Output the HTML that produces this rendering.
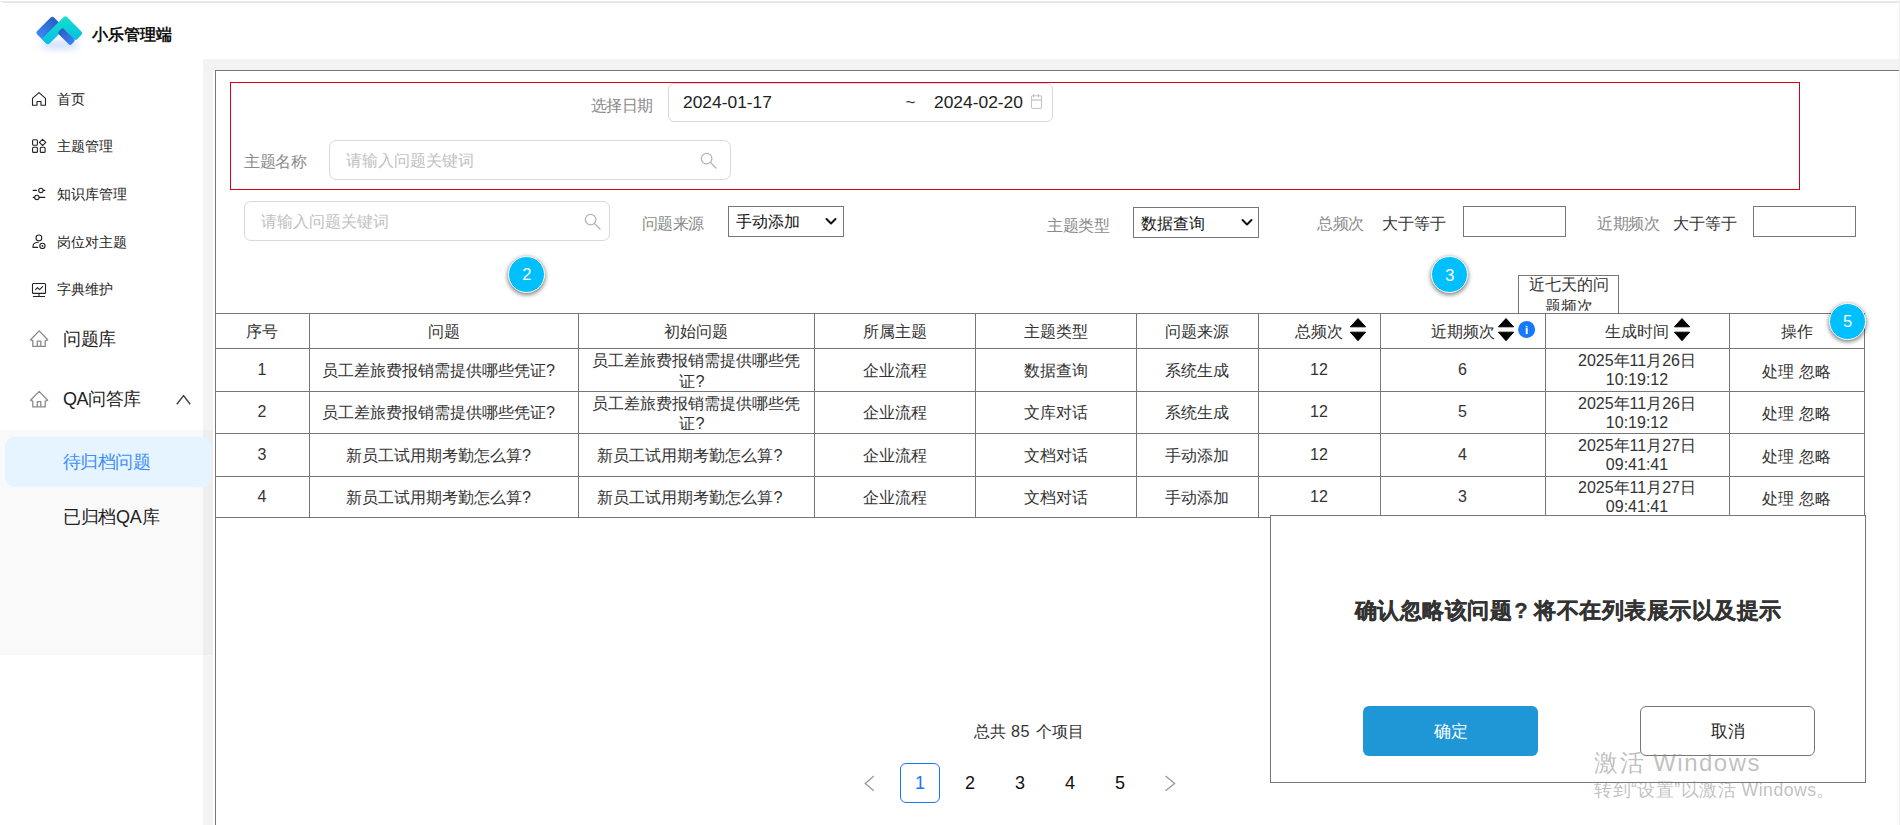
<!DOCTYPE html>
<html><head><meta charset="utf-8"><title>小乐管理端</title>
<style>
html,body{margin:0;padding:0;}
body{width:1900px;height:825px;overflow:hidden;position:relative;background:#fff;font-family:"Liberation Sans",sans-serif;}
.t{position:absolute;white-space:nowrap;line-height:1;}
.b{position:absolute;box-sizing:border-box;}
svg{position:absolute;overflow:visible;}
</style></head><body>

<div class="b" style="left:0px;top:1px;width:1900px;height:1px;background:#e8ebf1"></div>
<div class="b" style="left:3px;top:2px;width:1897px;height:1px;background:#e6e6e6"></div>
<div class="b" style="left:0px;top:430px;width:213px;height:225px;background:#f9f9f9"></div>
<div class="b" style="left:203px;top:70px;width:10px;height:755px;background:rgba(0,0,0,0.045)"></div>
<div class="b" style="left:203px;top:59px;width:1696px;height:11px;background:#f3f3f3"></div>
<div class="b" style="left:1899px;top:0px;width:1px;height:825px;background:#eeeeee"></div>
<div class="b" style="left:215px;top:70px;width:1684px;height:1px;background:#777"></div>
<div class="b" style="left:215px;top:70px;width:1px;height:755px;background:#777"></div>
<svg style="left:0px;top:0px" width="100" height="60" viewBox="0 0 100 60">
<defs>
<linearGradient id="gb1" x1="0" y1="0.5" x2="1" y2="0.5"><stop offset="0" stop-color="#3a88f6"/><stop offset="1" stop-color="#2a5fc2"/></linearGradient>
<linearGradient id="gc" x1="1" y1="0" x2="0" y2="1"><stop offset="0" stop-color="#14e2cc"/><stop offset="0.55" stop-color="#08c4e0"/><stop offset="1" stop-color="#06a6f4"/></linearGradient>
<linearGradient id="gb2" x1="0.5" y1="0" x2="0.5" y2="1"><stop offset="0" stop-color="#2a5ec2"/><stop offset="1" stop-color="#3a82f2"/></linearGradient>
<filter id="lsh" x="-50%" y="-50%" width="200%" height="200%"><feGaussianBlur stdDeviation="3"/></filter>
</defs>
<ellipse cx="60" cy="45" rx="20" ry="4.5" fill="#5b8cff" opacity="0.28" filter="url(#lsh)"/>
<g transform="translate(0 -0.4) matrix(0.70711 -0.70711 0.70711 0.70711 0 0)">
<rect x="1.7" y="48.5" width="23.8" height="17.5" rx="2.4" fill="url(#gb1)"/>
<path d="M1.7,57.4 H32.7 Q35,57.4 35,59.7 V80.2 Q35,82.5 32.7,82.5 H26.6 Q24.3,82.5 24.3,80.2 V66 H4.1 Q1.7,66 1.7,63.6 Z" fill="url(#gc)"/>
<rect x="17" y="64" width="7.6" height="18.3" rx="2.4" fill="url(#gb2)"/>
</g></svg>
<div class="t" style="left:92.00px;top:26.94px;font-size:16px;color:#111;font-weight:bold;text-align:left;">小乐管理端</div>
<svg style="left:0px;top:0px" width="60" height="310"><path d="M32.5,105.3 V98.3 L39,92.6 L45.5,98.3 V105.3 H41 V101.5 H37 V105.3 Z" fill="none" stroke="#222" stroke-width="1.1" stroke-linejoin="round" stroke-linecap="round"/><rect x="32.6" y="139.8" width="4.8" height="5.4" rx="1" fill="none" stroke="#222" stroke-width="1.1" stroke-linejoin="round" stroke-linecap="round"/><path d="M42.6,139.3 L45.8,142.4 L42.6,145.5 L39.4,142.4 Z" fill="none" stroke="#222" stroke-width="1.1" stroke-linejoin="round" stroke-linecap="round"/><rect x="32.6" y="147.3" width="4.8" height="5.1" rx="1" fill="none" stroke="#222" stroke-width="1.1" stroke-linejoin="round" stroke-linecap="round"/><rect x="40.3" y="147.3" width="4.8" height="5.1" rx="1" fill="none" stroke="#222" stroke-width="1.1" stroke-linejoin="round" stroke-linecap="round"/><path d="M33.2,190.4 H36.5 M43.5,190.4 H44.8 M33.2,197.4 H34.6 M39.3,197.4 H44.8" fill="none" stroke="#222" stroke-width="1.1" stroke-linejoin="round" stroke-linecap="round"/><circle cx="40.9" cy="190.4" r="2.2" fill="none" stroke="#222" stroke-width="1.1" stroke-linejoin="round" stroke-linecap="round"/><circle cx="36.9" cy="197.4" r="2.2" fill="none" stroke="#222" stroke-width="1.1" stroke-linejoin="round" stroke-linecap="round"/><circle cx="38.9" cy="237.9" r="2.9" fill="none" stroke="#222" stroke-width="1.1" stroke-linejoin="round" stroke-linecap="round"/><path d="M38.3,242.2 Q33,242.5 33,246.3 V247.4 H37.6" fill="none" stroke="#222" stroke-width="1.1" stroke-linejoin="round" stroke-linecap="round"/><circle cx="42.4" cy="245.9" r="2.6" fill="none" stroke="#222" stroke-width="1.1" stroke-linejoin="round" stroke-linecap="round"/><circle cx="42.4" cy="245.9" r="0.9" fill="#222"/><rect x="32.5" y="283.5" width="13" height="9.9" rx="1" fill="none" stroke="#222" stroke-width="1.1" stroke-linejoin="round" stroke-linecap="round"/><path d="M39,293.5 V296.4 M33.4,296.5 H44.6 M35.6,289.6 L37.5,287.6 L39.6,289.6 L42.6,286.6" fill="none" stroke="#222" stroke-width="1.1" stroke-linejoin="round" stroke-linecap="round"/></svg>
<div class="t" style="left:57.00px;top:91.76px;font-size:14.2px;color:#222;font-weight:normal;text-align:left;">首页</div>
<div class="t" style="left:57.00px;top:138.76px;font-size:14.2px;color:#222;font-weight:normal;text-align:left;">主题管理</div>
<div class="t" style="left:57.00px;top:186.96px;font-size:14.2px;color:#222;font-weight:normal;text-align:left;">知识库管理</div>
<div class="t" style="left:57.00px;top:235.16px;font-size:14.2px;color:#222;font-weight:normal;text-align:left;">岗位对主题</div>
<div class="t" style="left:57.00px;top:282.26px;font-size:14.2px;color:#222;font-weight:normal;text-align:left;">字典维护</div>
<svg style="left:0px;top:300px" width="220" height="120" viewBox="0 300 220 120"><path d="M32.8,346.4 V340.6 L30.6,339.8 L39.2,330.9 L47.7,339.8 L45.2,340.6 V346.4 Z M37.3,346.4 V341.2 H40.8 V346.4" fill="none" stroke="#8a8a8a" stroke-width="1.3" stroke-linejoin="round"/><path d="M32.8,406.9 V401.1 L30.6,400.3 L39.2,391.4 L47.7,400.3 L45.2,401.1 V406.9 Z M37.3,406.9 V401.7 H40.8 V406.9" fill="none" stroke="#8a8a8a" stroke-width="1.3" stroke-linejoin="round"/><path d="M176.8,404.2 L183.55,395.6 L190.2,404.2" fill="none" stroke="#444" stroke-width="1.5"/></svg>
<div class="t" style="left:63.00px;top:330.02px;font-size:18px;color:#222;font-weight:normal;text-align:left;letter-spacing:-0.4px">问题库</div>
<div class="t" style="left:63.00px;top:390.32px;font-size:18px;color:#222;font-weight:normal;text-align:left;letter-spacing:-0.4px">QA问答库</div>
<div class="b" style="left:5px;top:437px;width:206px;height:50px;background:#e6f4ff;border-radius:9px"></div>
<div class="t" style="left:62.50px;top:452.92px;font-size:18px;color:#3d8ef8;font-weight:normal;text-align:left;letter-spacing:-0.4px">待归档问题</div>
<div class="t" style="left:63.00px;top:508.02px;font-size:18px;color:#222;font-weight:normal;text-align:left;letter-spacing:-0.3px">已归档QA库</div>
<div class="b" style="left:230px;top:82px;width:1570px;height:108px;border:1px solid #d9001b"></div>
<div class="t" style="left:590.50px;top:97.74px;font-size:16px;color:#8a8a8a;font-weight:normal;text-align:left;letter-spacing:-0.5px">选择日期</div>
<div class="b" style="left:668px;top:83px;width:385px;height:39px;border:1px solid #d9d9d9;border-radius:6px;background:#fff"></div>
<div class="t" style="left:683.00px;top:93.90px;font-size:17.4px;color:#222;font-weight:normal;text-align:left;">2024-01-17</div>
<div class="t" style="left:905.50px;top:94.00px;font-size:17px;color:#333;font-weight:normal;text-align:left;">~</div>
<div class="t" style="left:934.00px;top:94.10px;font-size:17.4px;color:#222;font-weight:normal;text-align:left;">2024-02-20</div>
<svg style="left:1028px;top:92px" width="18" height="20"><rect x="3.5" y="3.8" width="10" height="12.7" rx="1.2" fill="none" stroke="#c4c4c4" stroke-width="1.1"/><path d="M3.5,8 H13.5" stroke="#c8c8c8" stroke-width="1.4"/><path d="M5.7,2 V5.6 M10.5,2 V5.6" stroke="#c4c4c4" stroke-width="1.1"/></svg>
<div class="t" style="left:244.00px;top:153.84px;font-size:16px;color:#8a8a8a;font-weight:normal;text-align:left;letter-spacing:-0.5px">主题名称</div>
<div class="b" style="left:329px;top:140px;width:402px;height:40px;border:1px solid #d9d9d9;border-radius:7px;background:#fff"></div>
<div class="t" style="left:346.30px;top:152.84px;font-size:16px;color:#bfbfbf;font-weight:normal;text-align:left;">请输入问题关键词</div>
<svg style="left:690px;top:145px" width="30" height="30"><circle cx="16.6" cy="13.6" r="5.3" fill="none" stroke="#b2b2b2" stroke-width="1.2"/><path d="M20.4,17.4 L26,23" stroke="#b2b2b2" stroke-width="1.3" stroke-linecap="round"/></svg>
<div class="b" style="left:244px;top:201px;width:366px;height:40px;border:1px solid #d9d9d9;border-radius:7px;background:#fff"></div>
<div class="t" style="left:261.30px;top:213.94px;font-size:16px;color:#bfbfbf;font-weight:normal;text-align:left;">请输入问题关键词</div>
<svg style="left:574px;top:206px" width="30" height="30"><circle cx="16.6" cy="13.6" r="5.3" fill="none" stroke="#b2b2b2" stroke-width="1.2"/><path d="M20.4,17.4 L26,23" stroke="#b2b2b2" stroke-width="1.3" stroke-linecap="round"/></svg>
<div class="t" style="left:641.80px;top:215.64px;font-size:16px;color:#8a8a8a;font-weight:normal;text-align:left;letter-spacing:-0.5px">问题来源</div>
<div class="b" style="left:728px;top:206px;width:116px;height:31px;border:1px solid #767676;border-radius:0;background:#fff"></div>
<div class="t" style="left:736.00px;top:213.19px;font-size:16.3px;color:#111;font-weight:normal;text-align:left;">手动添加</div>
<svg style="left:820px;top:210px" width="24" height="24"><path d="M6.5,9 L11,13.5 L15.5,9" fill="none" stroke="#111" stroke-width="2" stroke-linecap="round" stroke-linejoin="round"/></svg>
<div class="t" style="left:1047.30px;top:217.54px;font-size:16px;color:#8a8a8a;font-weight:normal;text-align:left;letter-spacing:-0.5px">主题类型</div>
<div class="b" style="left:1133px;top:207px;width:126px;height:31px;border:1px solid #767676;border-radius:0;background:#fff"></div>
<div class="t" style="left:1140.50px;top:215.19px;font-size:16.3px;color:#111;font-weight:normal;text-align:left;">数据查询</div>
<svg style="left:1236px;top:211px" width="24" height="24"><path d="M6.5,9 L11,13.5 L15.5,9" fill="none" stroke="#111" stroke-width="2" stroke-linecap="round" stroke-linejoin="round"/></svg>
<div class="t" style="left:1317.30px;top:215.74px;font-size:16px;color:#8a8a8a;font-weight:normal;text-align:left;letter-spacing:-0.5px">总频次</div>
<div class="t" style="left:1381.80px;top:215.29px;font-size:16.3px;color:#333;font-weight:normal;text-align:left;">大于等于</div>
<div class="b" style="left:1463px;top:206px;width:103px;height:31px;border:1px solid #767676;border-radius:0;background:#fff"></div>
<div class="t" style="left:1597.40px;top:215.94px;font-size:16px;color:#8a8a8a;font-weight:normal;text-align:left;letter-spacing:-0.5px">近期频次</div>
<div class="t" style="left:1672.80px;top:215.19px;font-size:16.3px;color:#333;font-weight:normal;text-align:left;">大于等于</div>
<div class="b" style="left:1753px;top:206px;width:103px;height:31px;border:1px solid #767676;border-radius:0;background:#fff"></div>
<div class="b" style="left:508.1px;top:256.0px;width:37.4px;height:37.4px;border-radius:50%;background:#00bfff;border:1.5px solid #fff;box-shadow:0 1.5px 4px 0.5px rgba(0,0,0,0.5)"></div>
<div class="t" style="left:516.80px;top:266.45px;font-size:16.5px;color:#fff;font-weight:normal;width:20px;text-align:center;">2</div>
<div class="b" style="left:1431.1px;top:256.1px;width:37.4px;height:37.4px;border-radius:50%;background:#00bfff;border:1.5px solid #fff;box-shadow:0 1.5px 4px 0.5px rgba(0,0,0,0.5)"></div>
<div class="t" style="left:1439.80px;top:266.55px;font-size:16.5px;color:#fff;font-weight:normal;width:20px;text-align:center;">3</div>
<div class="b" style="left:215px;top:313px;width:1650px;height:1px;background:#777"></div>
<div class="b" style="left:215px;top:348px;width:1650px;height:1px;background:#777"></div>
<div class="b" style="left:215px;top:391px;width:1650px;height:1px;background:#777"></div>
<div class="b" style="left:215px;top:433px;width:1650px;height:1px;background:#777"></div>
<div class="b" style="left:215px;top:476px;width:1650px;height:1px;background:#777"></div>
<div class="b" style="left:215px;top:517px;width:1056px;height:1px;background:#777"></div>
<div class="b" style="left:215px;top:313px;width:1px;height:205px;background:#777"></div>
<div class="b" style="left:309px;top:313px;width:1px;height:205px;background:#777"></div>
<div class="b" style="left:578px;top:313px;width:1px;height:205px;background:#777"></div>
<div class="b" style="left:814px;top:313px;width:1px;height:205px;background:#777"></div>
<div class="b" style="left:975px;top:313px;width:1px;height:205px;background:#777"></div>
<div class="b" style="left:1136px;top:313px;width:1px;height:205px;background:#777"></div>
<div class="b" style="left:1258px;top:313px;width:1px;height:205px;background:#777"></div>
<div class="b" style="left:1380px;top:313px;width:1px;height:205px;background:#777"></div>
<div class="b" style="left:1545px;top:313px;width:1px;height:205px;background:#777"></div>
<div class="b" style="left:1729px;top:313px;width:1px;height:205px;background:#777"></div>
<div class="b" style="left:1864px;top:313px;width:1px;height:205px;background:#777"></div>
<div class="b" style="left:1518px;top:275px;width:101px;height:39px;border:1px solid #777;background:#fff;overflow:hidden"></div>
<div class="t" style="left:1518.00px;top:276.44px;font-size:16.2px;color:#333;font-weight:normal;width:101px;text-align:center;">近七天的问</div>
<div class="t" style="left:1518.00px;top:298.04px;font-size:16.2px;color:#333;font-weight:normal;width:101px;text-align:center;clip-path:inset(0 0 3.5px 0)">题频次</div>
<div class="b" style="left:1518px;top:313px;width:101px;height:1px;background:#777"></div>
<div class="t" style="left:215.00px;top:323.14px;font-size:16.4px;color:#333;font-weight:normal;width:94px;text-align:center;">序号</div>
<div class="t" style="left:309.00px;top:323.14px;font-size:16.4px;color:#333;font-weight:normal;width:269px;text-align:center;">问题</div>
<div class="t" style="left:578.00px;top:323.14px;font-size:16.4px;color:#333;font-weight:normal;width:236px;text-align:center;">初始问题</div>
<div class="t" style="left:814.00px;top:323.14px;font-size:16.4px;color:#333;font-weight:normal;width:161px;text-align:center;">所属主题</div>
<div class="t" style="left:975.00px;top:323.14px;font-size:16.4px;color:#333;font-weight:normal;width:161px;text-align:center;">主题类型</div>
<div class="t" style="left:1136.00px;top:323.14px;font-size:16.4px;color:#333;font-weight:normal;width:122px;text-align:center;">问题来源</div>
<div class="t" style="left:1258.00px;top:323.14px;font-size:16.4px;color:#333;font-weight:normal;width:122px;text-align:center;">总频次</div>
<div class="t" style="left:1380.00px;top:323.14px;font-size:16.4px;color:#333;font-weight:normal;width:165px;text-align:center;">近期频次</div>
<div class="t" style="left:1545.00px;top:323.14px;font-size:16.4px;color:#333;font-weight:normal;width:184px;text-align:center;">生成时间</div>
<div class="t" style="left:1729.00px;top:323.14px;font-size:16.4px;color:#333;font-weight:normal;width:135px;text-align:center;">操作</div>
<svg style="left:1350px;top:317.6px" width="17" height="24"><path d="M8,0.6 L15.6,8.8 H0.4 Z M8,22.7 L15.6,14.2 H0.4 Z" fill="#000" stroke="#000" stroke-width="1" stroke-linejoin="round"/></svg>
<svg style="left:1497.8px;top:317.6px" width="17" height="24"><path d="M8,0.6 L15.6,8.8 H0.4 Z M8,22.7 L15.6,14.2 H0.4 Z" fill="#000" stroke="#000" stroke-width="1" stroke-linejoin="round"/></svg>
<svg style="left:1674.3px;top:317.6px" width="17" height="24"><path d="M8,0.6 L15.6,8.8 H0.4 Z M8,22.7 L15.6,14.2 H0.4 Z" fill="#000" stroke="#000" stroke-width="1" stroke-linejoin="round"/></svg>
<svg style="left:1518px;top:321px" width="18" height="18"><circle cx="8.6" cy="8.5" r="8.5" fill="#1677ff"/><rect x="7.75" y="6.6" width="1.9" height="6.5" fill="#fff"/><path d="M7.75,4.4 L9.65,5.3 L9.65,5.9 H7.75 Z" fill="#fff"/></svg>
<div class="t" style="left:215.00px;top:361.70px;font-size:16px;color:#333;font-weight:normal;width:94px;text-align:center;">1</div>
<div class="t" style="left:304.00px;top:361.99px;font-size:16.2px;color:#333;font-weight:normal;width:269px;text-align:center;">员工差旅费报销需提供哪些凭证?</div>
<div class="t" style="left:578.00px;top:352.19px;font-size:16.3px;color:#333;font-weight:normal;width:236px;text-align:center;">员工差旅费报销需提供哪些凭</div>
<div class="t" style="left:574.00px;top:372.99px;font-size:16.3px;color:#333;font-weight:normal;width:236px;text-align:center;">证?</div>
<div class="t" style="left:814.00px;top:361.89px;font-size:16.4px;color:#333;font-weight:normal;width:161px;text-align:center;">企业流程</div>
<div class="t" style="left:975.00px;top:361.89px;font-size:16.4px;color:#333;font-weight:normal;width:161px;text-align:center;">数据查询</div>
<div class="t" style="left:1136.00px;top:361.89px;font-size:16.4px;color:#333;font-weight:normal;width:122px;text-align:center;">系统生成</div>
<div class="t" style="left:1258.00px;top:361.50px;font-size:16px;color:#333;font-weight:normal;width:122px;text-align:center;">12</div>
<div class="t" style="left:1380.00px;top:361.50px;font-size:16px;color:#333;font-weight:normal;width:165px;text-align:center;">6</div>
<div class="t" style="left:1545.00px;top:353.20px;font-size:16px;color:#333;font-weight:normal;width:184px;text-align:center;">2025年11月26日</div>
<div class="t" style="left:1545.00px;top:372.40px;font-size:16px;color:#333;font-weight:normal;width:184px;text-align:center;">10:19:12</div>
<div class="t" style="left:1729.00px;top:362.64px;font-size:16.4px;color:#333;font-weight:normal;width:135px;text-align:center;">处理 忽略</div>
<div class="t" style="left:215.00px;top:404.20px;font-size:16px;color:#333;font-weight:normal;width:94px;text-align:center;">2</div>
<div class="t" style="left:304.00px;top:404.49px;font-size:16.2px;color:#333;font-weight:normal;width:269px;text-align:center;">员工差旅费报销需提供哪些凭证?</div>
<div class="t" style="left:578.00px;top:394.69px;font-size:16.3px;color:#333;font-weight:normal;width:236px;text-align:center;">员工差旅费报销需提供哪些凭</div>
<div class="t" style="left:574.00px;top:415.49px;font-size:16.3px;color:#333;font-weight:normal;width:236px;text-align:center;">证?</div>
<div class="t" style="left:814.00px;top:404.39px;font-size:16.4px;color:#333;font-weight:normal;width:161px;text-align:center;">企业流程</div>
<div class="t" style="left:975.00px;top:404.39px;font-size:16.4px;color:#333;font-weight:normal;width:161px;text-align:center;">文库对话</div>
<div class="t" style="left:1136.00px;top:404.39px;font-size:16.4px;color:#333;font-weight:normal;width:122px;text-align:center;">系统生成</div>
<div class="t" style="left:1258.00px;top:404.00px;font-size:16px;color:#333;font-weight:normal;width:122px;text-align:center;">12</div>
<div class="t" style="left:1380.00px;top:404.00px;font-size:16px;color:#333;font-weight:normal;width:165px;text-align:center;">5</div>
<div class="t" style="left:1545.00px;top:395.70px;font-size:16px;color:#333;font-weight:normal;width:184px;text-align:center;">2025年11月26日</div>
<div class="t" style="left:1545.00px;top:414.90px;font-size:16px;color:#333;font-weight:normal;width:184px;text-align:center;">10:19:12</div>
<div class="t" style="left:1729.00px;top:405.14px;font-size:16.4px;color:#333;font-weight:normal;width:135px;text-align:center;">处理 忽略</div>
<div class="t" style="left:215.00px;top:446.70px;font-size:16px;color:#333;font-weight:normal;width:94px;text-align:center;">3</div>
<div class="t" style="left:304.00px;top:446.99px;font-size:16.2px;color:#333;font-weight:normal;width:269px;text-align:center;">新员工试用期考勤怎么算?</div>
<div class="t" style="left:572.00px;top:446.99px;font-size:16.2px;color:#333;font-weight:normal;width:236px;text-align:center;">新员工试用期考勤怎么算?</div>
<div class="t" style="left:814.00px;top:446.89px;font-size:16.4px;color:#333;font-weight:normal;width:161px;text-align:center;">企业流程</div>
<div class="t" style="left:975.00px;top:446.89px;font-size:16.4px;color:#333;font-weight:normal;width:161px;text-align:center;">文档对话</div>
<div class="t" style="left:1136.00px;top:446.89px;font-size:16.4px;color:#333;font-weight:normal;width:122px;text-align:center;">手动添加</div>
<div class="t" style="left:1258.00px;top:446.50px;font-size:16px;color:#333;font-weight:normal;width:122px;text-align:center;">12</div>
<div class="t" style="left:1380.00px;top:446.50px;font-size:16px;color:#333;font-weight:normal;width:165px;text-align:center;">4</div>
<div class="t" style="left:1545.00px;top:438.20px;font-size:16px;color:#333;font-weight:normal;width:184px;text-align:center;">2025年11月27日</div>
<div class="t" style="left:1545.00px;top:457.40px;font-size:16px;color:#333;font-weight:normal;width:184px;text-align:center;">09:41:41</div>
<div class="t" style="left:1729.00px;top:447.64px;font-size:16.4px;color:#333;font-weight:normal;width:135px;text-align:center;">处理 忽略</div>
<div class="t" style="left:215.00px;top:488.70px;font-size:16px;color:#333;font-weight:normal;width:94px;text-align:center;">4</div>
<div class="t" style="left:304.00px;top:488.99px;font-size:16.2px;color:#333;font-weight:normal;width:269px;text-align:center;">新员工试用期考勤怎么算?</div>
<div class="t" style="left:572.00px;top:488.99px;font-size:16.2px;color:#333;font-weight:normal;width:236px;text-align:center;">新员工试用期考勤怎么算?</div>
<div class="t" style="left:814.00px;top:488.89px;font-size:16.4px;color:#333;font-weight:normal;width:161px;text-align:center;">企业流程</div>
<div class="t" style="left:975.00px;top:488.89px;font-size:16.4px;color:#333;font-weight:normal;width:161px;text-align:center;">文档对话</div>
<div class="t" style="left:1136.00px;top:488.89px;font-size:16.4px;color:#333;font-weight:normal;width:122px;text-align:center;">手动添加</div>
<div class="t" style="left:1258.00px;top:488.50px;font-size:16px;color:#333;font-weight:normal;width:122px;text-align:center;">12</div>
<div class="t" style="left:1380.00px;top:488.50px;font-size:16px;color:#333;font-weight:normal;width:165px;text-align:center;">3</div>
<div class="t" style="left:1545.00px;top:480.20px;font-size:16px;color:#333;font-weight:normal;width:184px;text-align:center;">2025年11月27日</div>
<div class="t" style="left:1545.00px;top:499.40px;font-size:16px;color:#333;font-weight:normal;width:184px;text-align:center;">09:41:41</div>
<div class="t" style="left:1729.00px;top:489.64px;font-size:16.4px;color:#333;font-weight:normal;width:135px;text-align:center;">处理 忽略</div>
<div class="b" style="left:1828.8px;top:302.9px;width:37.4px;height:37.4px;border-radius:50%;background:#00bfff;border:1.5px solid #fff;box-shadow:0 1.5px 4px 0.5px rgba(0,0,0,0.5)"></div>
<div class="t" style="left:1837.50px;top:313.35px;font-size:16.5px;color:#fff;font-weight:normal;width:20px;text-align:center;">5</div>
<div class="b" style="left:1270px;top:515px;width:596px;height:268px;border:1px solid #777;background:#fff"></div>
<div class="t" style="left:1354.50px;top:599.68px;font-size:22px;color:#333;font-weight:bold;text-align:left;letter-spacing:0.5px;-webkit-text-stroke:0.35px #333">确认忽略该问题<span style="display:inline-block;width:1em;text-align:left;padding-left:0.1em;box-sizing:border-box">?</span>将不在列表展示以及提示</div>
<div class="b" style="left:1363px;top:706px;width:175px;height:50px;background:#1f97d7;border-radius:6px"></div>
<div class="t" style="left:1363.00px;top:723.09px;font-size:16.5px;color:#fff;font-weight:normal;width:175px;text-align:center;">确定</div>
<div class="b" style="left:1640px;top:706px;width:175px;height:50px;border:1px solid #777;border-radius:6px;background:#fff"></div>
<div class="t" style="left:1640.00px;top:723.19px;font-size:16.5px;color:#222;font-weight:normal;width:175px;text-align:center;">取消</div>
<div class="t" style="left:973.60px;top:723.24px;font-size:16.2px;color:#333;font-weight:normal;text-align:left;word-spacing:0.8px">总共 <span style="letter-spacing:0.7px">85</span> 个项目</div>
<svg style="left:860px;top:770px" width="320" height="26"><path d="M13.8,6 L5.2,13.4 L13.8,20.8" fill="none" stroke="#999" stroke-width="1.3"/><path d="M305.6,6 L314.6,13.4 L305.6,20.8" fill="none" stroke="#999" stroke-width="1.3"/></svg>
<div class="b" style="left:900px;top:763px;width:40px;height:40px;border:1px solid #1677ff;border-radius:6px"></div>
<div class="t" style="left:900.00px;top:773.90px;font-size:18px;color:#1677ff;font-weight:normal;width:40px;text-align:center;">1</div>
<div class="t" style="left:950.00px;top:773.90px;font-size:18px;color:#111;font-weight:normal;width:40px;text-align:center;">2</div>
<div class="t" style="left:1000.00px;top:773.90px;font-size:18px;color:#111;font-weight:normal;width:40px;text-align:center;">3</div>
<div class="t" style="left:1050.00px;top:773.90px;font-size:18px;color:#111;font-weight:normal;width:40px;text-align:center;">4</div>
<div class="t" style="left:1100.00px;top:773.90px;font-size:18px;color:#111;font-weight:normal;width:40px;text-align:center;">5</div>
<div class="t" style="left:1594.00px;top:751.16px;font-size:24px;color:rgba(140,140,140,0.55);font-weight:normal;text-align:left;letter-spacing:1.5px">激活 Windows</div>
<div class="t" style="left:1594.00px;top:782.02px;font-size:17.6px;color:rgba(140,140,140,0.55);font-weight:normal;text-align:left;letter-spacing:0.5px">转到“设置”以激活 Windows。</div>
</body></html>
